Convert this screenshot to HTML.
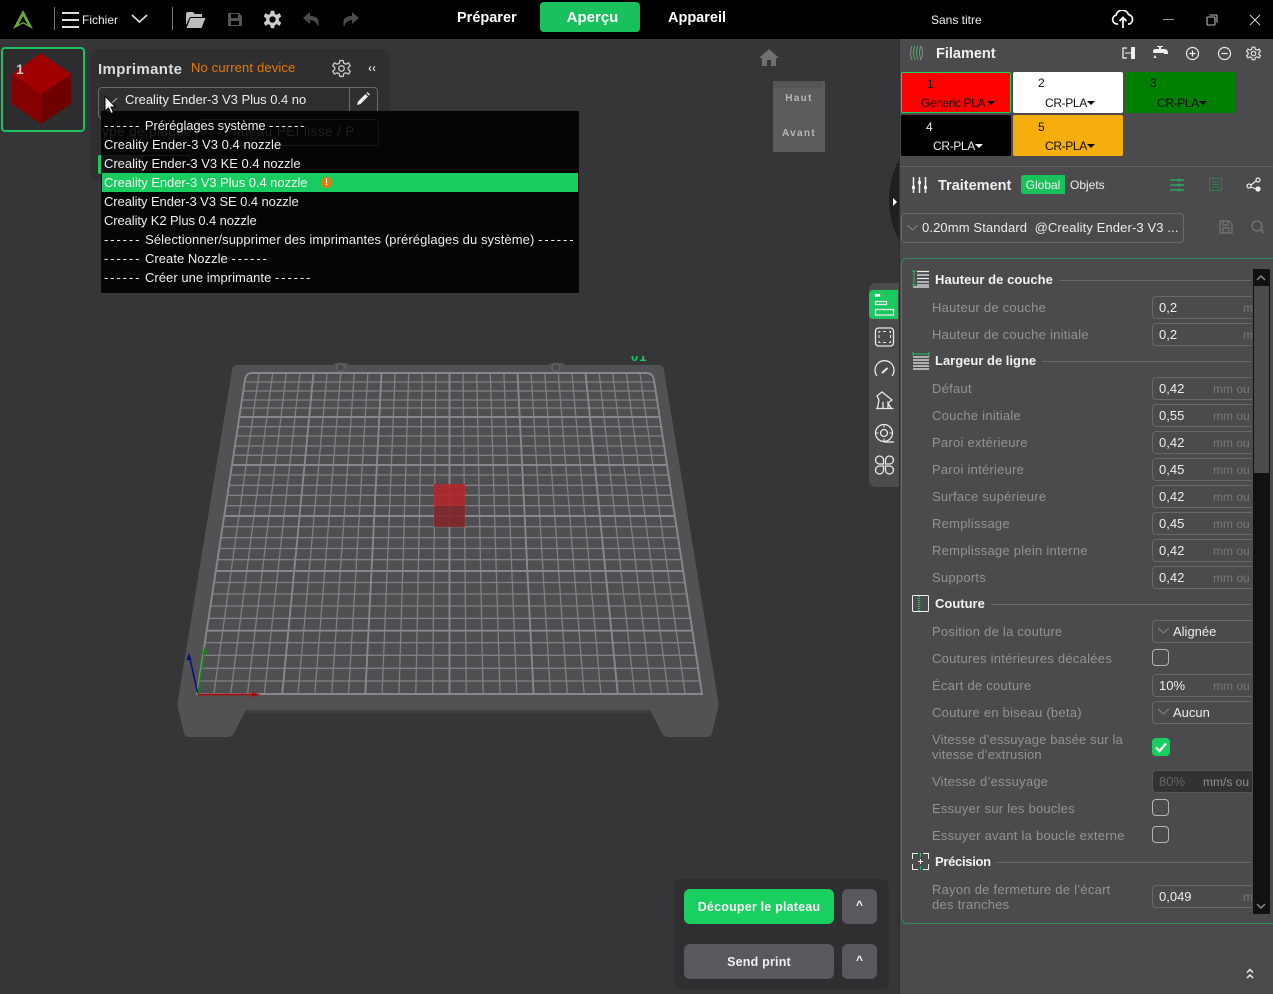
<!DOCTYPE html>
<html lang="fr"><head><meta charset="utf-8"><title>Sans titre</title>
<style>
html,body{margin:0;padding:0;width:1273px;height:994px;overflow:hidden;background:#363638;font-family:"Liberation Sans","Noto Sans CJK SC",sans-serif;color:#eee}
div,span,svg{position:absolute}
.t{white-space:nowrap;height:16px;line-height:16px;font-size:13px}
.l{left:932px;color:#939395;white-space:nowrap;font-size:13px;line-height:15px;letter-spacing:.25px}
.b{font-weight:bold;color:#f0f0f0}
.i{left:1152px;width:110px;height:21px;border:1px solid #68686a;border-radius:4px;box-sizing:content-box}
.v{left:1159px;color:#eee;font-size:13px;height:16px;line-height:16px;white-space:nowrap;margin-top:1px}
.u{color:#78787a;font-size:12px;height:16px;line-height:16px;white-space:nowrap}
.h{left:935px;font-weight:bold;color:#f2f2f2;font-size:13px;height:16px;line-height:16px;white-space:nowrap;margin-top:1px}
.hr{height:1px;background:#68686a}
.cb{left:1152px;width:14.500px;height:14.500px;border:1.500px solid #b4b4b6;border-radius:4px}
.d{left:104px;color:#eee;font-size:13px;height:19px;line-height:19px;white-space:nowrap;letter-spacing:.03px}
.d em{font-style:normal;letter-spacing:1.900px}
.sw{width:110px;height:41px;border-radius:2px;font-size:12px;line-height:15px}
.sw span{white-space:nowrap;letter-spacing:-.35px}
.sw span.n{letter-spacing:0}
.ar{width:0;height:0;border-left:4.500px solid transparent;border-right:4.500px solid transparent;border-top:4.500px solid #000}
</style></head><body>

<!-- viewport -->
<svg style="left:0;top:0" width="900" height="994" viewBox="0 0 900 994">
<path d="M238 365H332L336 363H346L350 365H548L552 363H562L566 365H658Q663 365 664 370L718 700Q719 708 717 712L712 733Q711 737 707 737H668Q664 737 662 733L650 710H246L234 733Q232 737 228 737H189Q185 737 184 733L179 712Q177 708 178 700L232 370Q233 365 238 365Z" fill="#525254"/>
<rect x="246" y="710" width="404" height="3" fill="#3e3e40"/>
<circle cx="340.500" cy="367.500" r="4" fill="#4a4a4c" stroke="#6a6a6c"/>
<circle cx="556" cy="367.500" r="4" fill="#4a4a4c" stroke="#6a6a6c"/>
<path d="M252 373H646Q653 373 654 380L702 694H197L245 380Q246 373 252 373Z" fill="#4f4f51"/>
<g stroke="#808084" stroke-width="1.300" fill="none">
<path d="M259.100 373L213.800 694M272.700 373L230.700 694M286.300 373L247.500 694M299.900 373L264.300 694M327.100 373L298 694M340.700 373L314.800 694M354.300 373L331.600 694M367.900 373L348.500 694M395.100 373L382.100 694M408.700 373L399 694M422.300 373L415.800 694M435.900 373L432.600 694M463.100 373L466.300 694M476.700 373L483.100 694M490.300 373L500 694M503.900 373L516.800 694M531.100 373L550.400 694M544.700 373L567.300 694M558.300 373L584.100 694M571.900 373L600.900 694M599.100 373L634.600 694M612.700 373L651.400 694M626.300 373L668.300 694M639.900 373L685.100 694"/>
<path d="M244.100 382H654.900M242.800 391H656.200M241.400 400H657.600M240.200 408H658.800M237.400 426.700H661.600M236 436H663M234.500 446H664.500M233.100 455.300H665.900M230.100 475H668.900M228.500 485.300H670.500M227 495.300H672M225.500 505.700H673.500M222.300 526.700H676.700M220.600 537.700H678.400M219 548.500H680M217.300 559.700H681.700M213.800 582.500H685.200M212.100 594H686.900M210.300 606H688.700M208.400 618.300H690.600M204.700 642.700H694.300M202.800 655.300H696.200M200.900 668.300H698.100M199 681H700"/>
</g>
<g stroke="#88888c" stroke-width="1.900" fill="none">
<path d="M313.500 373L282.200 694M381.500 373L365.300 694M449.500 373V694M517.500 373L533.600 694M585.500 373L617.800 694"/>
<path d="M238.900 417H660.100M231.600 465H667.400M223.900 516H675.100M215.600 571H683.400M206.600 630.700H692.400"/>
<path d="M197 694L245 380Q246 373 252 373H646Q653 373 654 380L702 694Z"/>
</g>
<rect x="434" y="484" width="31" height="22" fill="#b0262a" fill-opacity=".9"/>
<rect x="434" y="506" width="31" height="21" fill="#80262a" fill-opacity=".9"/>
<path d="M198 694L189 655" stroke="#0a0a7c" stroke-width="1.500"/><path d="M189 653L186.500 660H191.500Z" fill="#0a0a7c"/>
<path d="M198 694L205 648" stroke="#0a8c0a" stroke-width="1.500"/><path d="M205 647L202 654H207Z" fill="#0a8c0a"/>
<path d="M198 694.500H255" stroke="#a00c0c" stroke-width="1.800"/><path d="M260 694.500L252 692V697Z" fill="#a00c0c"/>
</svg>
<div style="left:625px;top:356px;width:30px;height:6px;overflow:hidden"><span style="left:6px;top:-6px;font:bold 13px/14px 'Liberation Sans',sans-serif;color:#19c764;white-space:nowrap;letter-spacing:1px">01</span></div>

<!-- home + cube -->
<svg style="left:758px;top:48px" width="22" height="20" viewBox="0 0 22 20"><path d="M11 1L1 10H4V18H9V12H13V18H18V10H21Z" fill="#707072"/></svg>
<div style="left:773px;top:81px;width:52px;height:71px;background:#5c5c5e"></div>
<div style="left:773px;top:81px;width:50px;height:7px;background:#555557"></div>
<div style="left:773px;top:93px;width:52px;text-align:center;font:bold 10px/12px 'Liberation Sans',sans-serif;color:#b8b8ba;letter-spacing:1.300px">Haut</div>
<div style="left:773px;top:128px;width:52px;text-align:center;font:bold 10px/12px 'Liberation Sans',sans-serif;color:#b8b8ba;letter-spacing:1.300px">Avant</div>

<!-- collapse half circle -->
<svg style="left:885px;top:155px" width="16" height="90" viewBox="0 0 16 90"><path d="M15 4Q4 22 4 45T15 86Z" fill="#1f1f21"/><path d="M8 43L12 47L8 51Z" fill="#fff"/></svg>

<!-- tool strip -->
<div style="left:869px;top:283px;width:32px;height:204px;background:#4c4c4e;border-radius:7px 0 0 7px"></div>
<div style="left:869px;top:290px;width:29px;height:29px;background:#19c85f;border-radius:4px 0 0 4px"></div>
<svg style="left:870px;top:290px" width="30" height="195" viewBox="0 0 30 195" fill="none" stroke="#e8e8e8" stroke-width="1.300">
<rect x="5.500" y="4.500" width="4" height="1.500" fill="#fff" stroke="#fff"/><rect x="5.500" y="11.500" width="11" height="3"/><rect x="5.500" y="19.500" width="18" height="5.500"/>
<rect x="5.500" y="38" width="18" height="18" rx="3"/><path d="M9 43v-1.500h1.500M19 41.500h1.500V43M9 51v1.500h1.500M19 52.500h1.500V51M13 41.500h3M13 52.500h3M9 45v3M20.500 45v3" stroke-width="1"/>
<path d="M7 86A9.500 9.500 0 1 1 22 86"/><path d="M12 83L17.500 78" stroke-width="2"/>
<path d="M6 118.500H23.500M7.500 118L9 110L7 106L12 102L22 110L18 113M13 118V112M18 118V113L21 118"/>
<circle cx="14" cy="143" r="8.500"/><circle cx="14" cy="143" r="3.500"/><path d="M14 152H24"/><path d="M14 134.500v3M14 148.500v3M5.500 143h3M19.500 143h3" stroke-width="1"/>
<path d="M13.500 174h-4a4 4 0 1 1 4-4zM15.500 174h4a4 4 0 1 0-4-4zM13.500 176h-4a4 4 0 1 0 4 4zM15.500 176h4a4 4 0 1 1-4 4z"/>
</svg>

<!-- bottom buttons -->
<div style="left:674px;top:879px;width:215px;height:110px;background:#2f2f31;border-radius:7px"></div>
<div style="left:684px;top:889px;width:150px;height:35px;background:#19cf60;border-radius:6px;text-align:center;font:bold 12.500px/37px 'Liberation Sans',sans-serif;color:#f4f4f4;letter-spacing:.2px">Découper le plateau</div>
<div style="left:842px;top:889px;width:35px;height:35px;background:#59595d;border-radius:6px;text-align:center;font:bold 12px/33px 'Liberation Sans',sans-serif;color:#f4f4f4">^</div>
<div style="left:684px;top:944px;width:150px;height:35px;background:#59595d;border-radius:6px;text-align:center;font:bold 12.500px/37px 'Liberation Sans',sans-serif;color:#f0f0f0;letter-spacing:.2px">Send print</div>
<div style="left:842px;top:944px;width:35px;height:35px;background:#59595d;border-radius:6px;text-align:center;font:bold 12px/33px 'Liberation Sans',sans-serif;color:#f4f4f4">^</div>

<!-- thumbnail -->
<div style="left:1px;top:47px;width:80px;height:81px;background:#2d2d2f;border:2px solid #1cc160;border-radius:4px"></div>
<svg style="left:0;top:47px" width="85" height="85" viewBox="0 47 85 85"><path d="M41 53L71 74L41 95L12 74Z" fill="#a00000"/><path d="M12 74L41 95V124L12 104Z" fill="#850000"/><path d="M71 74L41 95V124L71 104Z" fill="#6e0000"/></svg>
<div class="t" style="left:16px;top:61px;font-size:14px;color:#c8c8c8;font-weight:bold">1</div>

<!-- printer panel -->
<div style="left:90px;top:49px;width:300px;height:131px;background:#2f2f31;border-radius:7px"></div>
<div class="t b" style="left:98px;top:62px;font-size:15px;letter-spacing:.35px;color:#ddd">Imprimante</div>
<div class="t" style="left:191px;top:60px;color:#e67a00;letter-spacing:.15px">No current device</div>
<svg style="left:332px;top:59px" width="19" height="19" viewBox="0 0 24 24" fill="none" stroke="#c8c8c8" stroke-width="1.700"><circle cx="12" cy="12" r="3.500"/><path d="M10 2H14L15 5.500L17.500 6.500L21 5L23 8.500L20.500 11V13L23 15.500L21 19L17.500 17.500L15 18.500L14 22H10L9 18.500L6.500 17.500L3 19L1 15.500L3.500 13V11L1 8.500L3 5L6.500 6.500L9 5.500Z"/></svg>
<div class="t" style="left:368px;top:60px;font-size:12px;color:#ccc;font-weight:bold">‹‹</div>
<div style="left:98px;top:87px;width:278px;height:30px;border:1px solid #6a6a6c;border-radius:4px"></div>
<div style="left:349px;top:88px;width:1px;height:24px;background:#6a6a6c"></div>
<svg style="left:106px;top:97px" width="12" height="7" viewBox="0 0 12 7" fill="none" stroke="#aaa"><path d="M1 1L6 6L11 1"/></svg>
<div class="t" style="left:125px;top:92px;color:#ececec;letter-spacing:-.03px">Creality Ender-3 V3 Plus 0.4 no</div>
<svg style="left:355px;top:91px" width="16" height="16" viewBox="0 0 16 16"><path d="M2 14L3 10.500L10.500 3L13 5.500L5.500 13ZM11.500 2L12.500 1L15 3.500L14 4.500Z" fill="#eee"/></svg>

<!-- dropdown -->
<div style="left:101px;top:111px;width:478px;height:182px;background:#050506"></div>
<div class="t" style="left:102px;top:124px;font-size:13.500px;color:#202022;letter-spacing:.4px">ype de plaque</div>
<svg style="left:198px;top:129px" width="11" height="6" viewBox="0 0 11 6" fill="none" stroke="#202022"><path d="M0 0L5.500 5L11 0"/></svg>
<div class="t" style="left:224px;top:124px;font-size:13.500px;color:#202022;letter-spacing:.4px">Plateau PEI lisse / P</div>
<div style="left:197px;top:119px;width:180px;height:25px;border:1px solid #18181a;border-radius:4px"></div>
<div style="left:102px;top:155px;width:41px;height:18px;background:#141416"></div>
<div style="left:101px;top:155px;width:88px;height:17px;border:1px solid #18181a;border-radius:0 4px 4px 0"></div>
<div style="left:98px;top:155px;width:3px;height:19px;background:#19c85f;border-radius:2px 0 0 2px"></div>
<div style="left:102px;top:173px;width:476px;height:19px;background:#19cc60"></div>
<div class="d" style="top:116px;letter-spacing:-.08px"><em>------</em> Préréglages système <em>------</em></div>
<div class="d" style="top:135px">Creality Ender-3 V3 0.4 nozzle</div>
<div class="d" style="top:154px;letter-spacing:-.02px">Creality Ender-3 V3 KE 0.4 nozzle</div>
<div class="d" style="top:173px;color:#f4f4f4;letter-spacing:-.05px">Creality Ender-3 V3 Plus 0.4 nozzle</div>
<div style="left:321px;top:177px;width:11px;height:11px;border-radius:50%;background:#e8780a;color:#fff;font:bold 9px/11px 'Liberation Sans',sans-serif;text-align:center">!</div>
<div class="d" style="top:192px;letter-spacing:-.08px">Creality Ender-3 V3 SE 0.4 nozzle</div>
<div class="d" style="top:211px;letter-spacing:-.1px">Creality K2 Plus 0.4 nozzle</div>
<div class="d" style="top:230px;letter-spacing:.09px"><em>------</em> Sélectionner/supprimer des imprimantes (préréglages du système) <em>------</em></div>
<div class="d" style="top:249px"><em>------</em> Create Nozzle <em>------</em></div>
<div class="d" style="top:268px"><em>------</em> Créer une imprimante <em>------</em></div>

<!-- cursor -->
<svg style="left:103px;top:95px" width="16" height="20" viewBox="0 0 16 20"><path d="M2 1V16L5.500 13L8 18.500L10.500 17.500L8 12H12.500Z" fill="#fff" stroke="#000" stroke-width="1"/></svg>

<!-- top bar -->
<div style="left:0;top:0;width:1273px;height:39px;background:#000"></div>
<svg style="left:12px;top:9px" width="22" height="21" viewBox="0 0 22 21"><path d="M11 1L21 20L11 14.500L1 20Z" fill="#6ea83a"/><path d="M11 7L15.500 15.500L11 13L6.500 15.500Z" fill="#000"/></svg>
<div style="left:54px;top:7px;width:1px;height:23px;background:#777"></div>
<svg style="left:62px;top:11px" width="18" height="18" viewBox="0 0 18 18" stroke="#ddd" stroke-width="2"><path d="M0 2H17M0 9H17M0 16H17"/></svg>
<div class="t" style="left:82px;top:12px;font-size:12px;color:#eee">Fichier</div>
<svg style="left:131px;top:14px" width="17" height="10" viewBox="0 0 17 10" fill="none" stroke="#ddd" stroke-width="1.700"><path d="M1 1L8.500 8L16 1"/></svg>
<div style="left:172px;top:7px;width:1px;height:23px;background:#777"></div>
<svg style="left:185px;top:11px" width="21" height="18" viewBox="0 0 21 18"><path d="M1 3Q1 1 3 1H8L10 3H17V6H5L1 14Z" fill="#bdbdbd"/><path d="M5.500 7H20.500L16.500 17H1.500Z" fill="#bdbdbd"/></svg>
<svg style="left:227px;top:12px" width="16" height="15" viewBox="0 0 16 15"><path d="M1 1H12L15 4V14H1Z" fill="#555"/><rect x="4" y="2" width="7" height="4" fill="#000"/><rect x="4" y="9" width="8" height="4" fill="#000"/></svg>
<svg style="left:263px;top:10px" width="19" height="19" viewBox="0 0 24 24"><path d="M10 1H14L15 5L17.500 6L21 4L23 8L20 10.500V13.500L23 16L21 20L17.500 18L15 19L14 23H10L9 19L6.500 18L3 20L1 16L4 13.500V10.500L1 8L3 4L6.500 6L9 5Z" fill="#ccc"/><circle cx="12" cy="12" r="4" fill="#000"/></svg>
<svg style="left:302px;top:11px" width="19" height="17" viewBox="0 0 19 17"><path d="M8 1L1 7L8 13V9Q14 9 16 16Q19 5 8 5Z" fill="#4c4c4c"/></svg>
<svg style="left:341px;top:11px" width="19" height="17" viewBox="0 0 19 17"><path d="M11 1L18 7L11 13V9Q5 9 3 16Q0 5 11 5Z" fill="#4c4c4c"/></svg>
<div class="t b" style="left:457px;top:10px;font-size:14.500px;color:#fff">Préparer</div>
<div style="left:540px;top:2px;width:100px;height:30px;background:#19c15c;border-radius:4px;text-align:center;font:bold 15px/31px 'Liberation Sans',sans-serif;color:#fff;text-indent:5px">Aperçu</div>
<div class="t b" style="left:668px;top:10px;font-size:14.500px;color:#fff">Appareil</div>
<div class="t" style="left:931px;top:12px;font-size:12px;color:#eee">Sans titre</div>
<svg style="left:1111px;top:10px" width="24" height="19" viewBox="0 0 24 19" fill="none" stroke="#fff" stroke-width="1.700"><path d="M7 14H5.500A4.500 4.500 0 0 1 5 5.200A6.500 6.500 0 0 1 17.500 4.500A5 5 0 0 1 18.500 14H17M12 18V8M8.500 11L12 7.500L15.500 11"/></svg>
<div style="left:1163px;top:19px;width:11px;height:1px;background:#999"></div>
<svg style="left:1206px;top:14px" width="12" height="12" viewBox="0 0 12 12" fill="none" stroke="#bbb" stroke-width="1.100"><rect x="1" y="3" width="8" height="8" rx="1"/><path d="M3.500 1H10Q11 1 11 2V8.500"/></svg>
<svg style="left:1249px;top:14px" width="12" height="12" viewBox="0 0 12 12" stroke="#ccc" stroke-width="1.100"><path d="M1 1L11 11M11 1L1 11"/></svg>

<!-- right panel -->
<div style="left:900px;top:39px;width:373px;height:955px;background:#4b4b4d"></div>
<div style="left:899px;top:39px;width:1px;height:955px;background:#2f2f31"></div>
<svg style="left:909px;top:45px" width="16" height="16" viewBox="0 0 16 16" fill="none" stroke-width="1"><path d="M3 1Q0 8 3 15" stroke="#888"/><path d="M6 1Q3 8 6 15" stroke="#3cae64"/><path d="M9 1Q6 8 9 15" stroke="#3cae64"/><path d="M12 1Q9 8 12 15" stroke="#888"/><path d="M12 1Q15 8 12 15" stroke="#888"/></svg>
<div class="t b" style="left:936px;top:46px;font-size:14.500px">Filament</div>
<svg style="left:1122px;top:46px" width="14" height="14" viewBox="0 0 14 14"><path d="M5 2H1V12H5" stroke="#eee" fill="none" stroke-width="1.300"/><rect x="9" y="1" width="4" height="12" fill="#eee"/><path d="M3 7H9" stroke="#eee"/></svg>
<svg style="left:1153px;top:45px" width="15" height="15" viewBox="0 0 15 15"><path d="M0 6Q0 4 3 4H6V2H4V1H10V2H8V4H11Q15 4 15 8V9H11V8H2Q0 8 0 7Z" fill="#eee"/><path d="M2 10L3.500 13H.5Z" fill="#eee"/></svg>
<svg style="left:1185px;top:46px" width="15" height="15" viewBox="0 0 15 15" fill="none" stroke="#eee" stroke-width="1.200"><circle cx="7.500" cy="7.500" r="6"/><path d="M4.500 7.500H10.500M7.500 4.500V10.500"/></svg>
<svg style="left:1217px;top:46px" width="15" height="15" viewBox="0 0 15 15" fill="none" stroke="#eee" stroke-width="1.200"><circle cx="7.500" cy="7.500" r="6"/><path d="M4.500 7.500H10.500"/></svg>
<svg style="left:1246px;top:46px" width="15" height="15" viewBox="0 0 24 24" fill="none" stroke="#ddd" stroke-width="2"><circle cx="12" cy="12" r="3.500"/><path d="M10 2H14L15 5.500L17.500 6.500L21 5L23 8.500L20.500 11V13L23 15.500L21 19L17.500 17.500L15 18.500L14 22H10L9 18.500L6.500 17.500L3 19L1 15.500L3.500 13V11L1 8.500L3 5L6.500 6.500L9 5.500Z"/></svg>

<div class="sw" style="left:901px;top:72px;width:108px;height:39px;background:#f00;border:1px solid #24d060;color:#111"><span class="n" style="left:25px;top:4px">1</span><span style="left:19px;top:23px">Generic PLA</span><div class="ar" style="left:85px;top:28px"></div></div>
<div class="sw" style="left:1013px;top:72px;background:#fff;color:#111"><span class="n" style="left:25px;top:4px">2</span><span style="left:32px;top:24px">CR-PLA</span><div class="ar" style="left:74px;top:29px"></div></div>
<div class="sw" style="left:1125px;top:72px;background:#008000;color:#111"><span class="n" style="left:25px;top:4px">3</span><span style="left:32px;top:24px">CR-PLA</span><div class="ar" style="left:74px;top:29px"></div></div>
<div class="sw" style="left:901px;top:115px;background:#000;color:#eee"><span class="n" style="left:25px;top:5px">4</span><span style="left:32px;top:24px">CR-PLA</span><div class="ar" style="left:74px;top:29px;border-top-color:#fff"></div></div>
<div class="sw" style="left:1013px;top:115px;background:#f6ae0c;color:#111"><span class="n" style="left:25px;top:5px">5</span><span style="left:32px;top:24px">CR-PLA</span><div class="ar" style="left:74px;top:29px"></div></div>

<div style="left:900px;top:166px;width:373px;height:1px;background:#626264"></div>
<svg style="left:911px;top:176px" width="17" height="18" viewBox="0 0 17 18" stroke="#eee" stroke-width="1.500" fill="#eee"><path d="M2.500 1V17M8.500 1V17M14.500 1V17"/><rect x="1" y="10" width="3" height="3" stroke="none"/><rect x="7" y="5" width="3" height="3" stroke="none"/><rect x="13" y="10" width="3" height="3" stroke="none"/></svg>
<div class="t b" style="left:938px;top:178px;font-size:14.500px">Traitement</div>
<div style="left:1021px;top:175px;width:44px;height:19px;background:#19c15c;border-radius:3px 0 0 3px;text-align:center;font:12px/20px 'Liberation Sans',sans-serif;color:#f0f0f0">Global</div>
<div class="t" style="left:1070px;top:177px;font-size:12px;color:#eee">Objets</div>
<svg style="left:1170px;top:178px" width="15" height="14" viewBox="0 0 15 14" stroke="#2ea55e" fill="#2ea55e" stroke-width="1.500"><path d="M0 2H14M0 7H14M0 12H14"/><circle cx="9" cy="2" r="1.500" stroke="none"/><circle cx="9" cy="7" r="1.500" stroke="none"/><circle cx="9" cy="12" r="1.500" stroke="none"/></svg>
<svg style="left:1209px;top:178px" width="13" height="13" viewBox="0 0 13 13" fill="none" stroke="#2f7d50" stroke-width="1"><rect x=".5" y=".5" width="12" height="12"/><path d="M3 4H10M3 6.500H10M3 9H10"/></svg>
<svg style="left:1246px;top:177px" width="15" height="15" viewBox="0 0 15 15" fill="none" stroke="#eee" stroke-width="1.200"><circle cx="3" cy="9" r="2"/><circle cx="12" cy="3" r="2"/><circle cx="12" cy="12" r="2" fill="#eee"/><path d="M5 8L10 4M5 10L10 12"/></svg>

<div style="left:901px;top:213px;width:281px;height:28px;border:1px solid #6a6a6c;border-radius:4px"></div>
<svg style="left:907px;top:225px" width="11" height="6" viewBox="0 0 11 6" fill="none" stroke="#8a8a8c"><path d="M0 0L5.500 5L11 0"/></svg>
<div class="t" style="left:922px;top:220px;letter-spacing:.12px;color:#ececec;white-space:pre">0.20mm Standard  @Creality Ender-3 V3 ...</div>
<svg style="left:1219px;top:220px" width="14" height="14" viewBox="0 0 14 14" fill="none" stroke="#757577" stroke-width="1.200"><path d="M1 1H10L13 4V13H1Z"/><path d="M4 1V5H9V1M4 13V8H10V13"/></svg>
<svg style="left:1251px;top:220px" width="14" height="14" viewBox="0 0 14 14" fill="none" stroke="#757577" stroke-width="1.300"><circle cx="6" cy="6" r="5"/><path d="M10 10L13 13"/></svg>

<!-- settings container -->
<div style="left:901px;top:258px;width:380px;height:664px;border:1px solid #2e8a57;border-right:none;border-radius:6px"></div>

<!-- sections -->
<svg style="left:912px;top:270px" width="18" height="18" viewBox="0 0 18 18" stroke="#eee" fill="none"><path d="M5 1.500H17M5 5H17M5 8.500H17M5 12H17M5 15H17M1 17H17" stroke-width="1.300"/><path d="M2 1V15M0 1H4M0 15H4" stroke="#22c060"/></svg>
<div class="h" style="top:271px;letter-spacing:.05px">Hauteur de couche</div><div class="hr" style="left:1059px;top:280px;width:192px"></div>
<svg style="left:912px;top:352px" width="18" height="18" viewBox="0 0 18 18" stroke="#eee" fill="none"><path d="M1 5H17M1 8H17M1 11H17M1 14H17M1 17H17" stroke-width="1.300"/><path d="M1 2H17M1 0V4M17 0V4" stroke="#22c060"/></svg>
<div class="h" style="top:352px">Largeur de ligne</div><div class="hr" style="left:1042px;top:361px;width:209px"></div>
<svg style="left:912px;top:595px" width="18" height="18" viewBox="0 0 18 18" fill="none"><rect x=".5" y=".5" width="16" height="16" rx="1" stroke="#eee"/><path d="M7 1V17" stroke="#22c060" stroke-width="2.500" stroke-dasharray="1 1"/></svg>
<div class="h" style="top:595px">Couture</div><div class="hr" style="left:991px;top:604px;width:260px"></div>
<svg style="left:912px;top:853px" width="18" height="18" viewBox="0 0 18 18" fill="none" stroke="#eee"><path d="M6 .500H.500V6M11 .500H16.500V6M6 16.500H.500V11M11 16.500H16.500V11"/><path d="M6 8.500H11M8.500 6V11"/><path d="M8.500 0V4M8.500 13V17" stroke="#22c060"/></svg>
<div class="h" style="top:853px;letter-spacing:-.3px">Précision</div><div class="hr" style="left:996px;top:862px;width:255px"></div>

<!-- rows -->
<div class="l" style="top:300px">Hauteur de couche</div>
<div class="l" style="top:327px">Hauteur de couche initiale</div>
<div class="l" style="top:381px">Défaut</div>
<div class="l" style="top:408px">Couche initiale</div>
<div class="l" style="top:435px">Paroi extérieure</div>
<div class="l" style="top:462px">Paroi intérieure</div>
<div class="l" style="top:489px">Surface supérieure</div>
<div class="l" style="top:516px">Remplissage</div>
<div class="l" style="top:543px">Remplissage plein interne</div>
<div class="l" style="top:570px">Supports</div>
<div class="l" style="top:624px">Position de la couture</div>
<div class="l" style="top:651px">Coutures intérieures décalées</div>
<div class="l" style="top:678px">Écart de couture</div>
<div class="l" style="top:705px">Couture en biseau (beta)</div>
<div class="l" style="top:732px;letter-spacing:.15px">Vitesse d’essuyage basée sur la<br>vitesse d’extrusion</div>
<div class="l" style="top:774px">Vitesse d’essuyage</div>
<div class="l" style="top:801px">Essuyer sur les boucles</div>
<div class="l" style="top:828px">Essuyer avant la boucle externe</div>
<div class="l" style="top:882px">Rayon de fermeture de l’écart<br>des tranches</div>

<div class="i" style="top:296px"></div><div class="v" style="top:299px">0,2</div><div class="u" style="left:1243px;top:300px">m</div>
<div class="i" style="top:323px"></div><div class="v" style="top:326px">0,2</div><div class="u" style="left:1243px;top:327px">m</div>
<div class="i" style="top:377px"></div><div class="v" style="top:380px">0,42</div><div class="u" style="left:1213px;top:381px">mm ou</div>
<div class="i" style="top:404px"></div><div class="v" style="top:407px">0,55</div><div class="u" style="left:1213px;top:408px">mm ou</div>
<div class="i" style="top:431px"></div><div class="v" style="top:434px">0,42</div><div class="u" style="left:1213px;top:435px">mm ou</div>
<div class="i" style="top:458px"></div><div class="v" style="top:461px">0,45</div><div class="u" style="left:1213px;top:462px">mm ou</div>
<div class="i" style="top:485px"></div><div class="v" style="top:488px">0,42</div><div class="u" style="left:1213px;top:489px">mm ou</div>
<div class="i" style="top:512px"></div><div class="v" style="top:515px">0,45</div><div class="u" style="left:1213px;top:516px">mm ou</div>
<div class="i" style="top:539px"></div><div class="v" style="top:542px">0,42</div><div class="u" style="left:1213px;top:543px">mm ou</div>
<div class="i" style="top:566px"></div><div class="v" style="top:569px">0,42</div><div class="u" style="left:1213px;top:570px">mm ou</div>
<div class="i" style="top:620px"></div><svg style="left:1158px;top:628px" width="11" height="6" viewBox="0 0 11 6" fill="none" stroke="#8a8a8c"><path d="M0 0L5.500 5L11 0"/></svg><div class="v" style="left:1173px;top:623px">Alignée</div>
<div class="cb" style="top:649px"></div>
<div class="i" style="top:674px"></div><div class="v" style="top:677px">10%</div><div class="u" style="left:1213px;top:678px">mm ou</div>
<div class="i" style="top:701px"></div><svg style="left:1158px;top:709px" width="11" height="6" viewBox="0 0 11 6" fill="none" stroke="#8a8a8c"><path d="M0 0L5.500 5L11 0"/></svg><div class="v" style="left:1173px;top:704px">Aucun</div>
<div style="left:1152px;top:738px;width:18px;height:18px;background:#19cf60;border-radius:4px"></div>
<svg style="left:1152px;top:738px" width="18" height="18" viewBox="0 0 18 18" fill="none" stroke="#fff" stroke-width="2.200"><path d="M4 9.500L7.500 13L14 5.500"/></svg>
<div class="i" style="top:770px;background:#323234;border-color:#555"></div><div class="v" style="top:773px;color:#666668">80%</div><div class="u" style="left:1203px;top:774px;color:#909092">mm/s ou</div>
<div class="cb" style="top:799px"></div>
<div class="cb" style="top:826px"></div>
<div class="i" style="top:885px"></div><div class="v" style="top:888px">0,049</div><div class="u" style="left:1243px;top:889px">m</div>

<!-- scrollbar, drawn last to clip inputs -->
<div style="left:1252px;top:269px;width:1px;height:645px;background:#4b4b4d"></div>
<div style="left:1253px;top:269px;width:17px;height:645px;background:#111113"></div>
<div style="left:1254px;top:286px;width:15px;height:187px;background:#4b4b4d"></div>
<svg style="left:1256px;top:275px" width="10" height="6" viewBox="0 0 10 6" fill="none" stroke="#888" stroke-width="1.500"><path d="M1 5L5 1L9 5"/></svg>
<svg style="left:1256px;top:903px" width="10" height="6" viewBox="0 0 10 6" fill="none" stroke="#888" stroke-width="1.500"><path d="M1 1L5 5L9 1"/></svg>
<div style="left:1270px;top:269px;width:3px;height:645px;background:#4b4b4d"></div>

<svg style="left:1245px;top:968px" width="10" height="12" viewBox="0 0 10 12" fill="none" stroke="#eee" stroke-width="1.500"><path d="M2 4.500L5 1.500L8 4.500M2 10L5 7L8 10"/></svg>
</body></html>
